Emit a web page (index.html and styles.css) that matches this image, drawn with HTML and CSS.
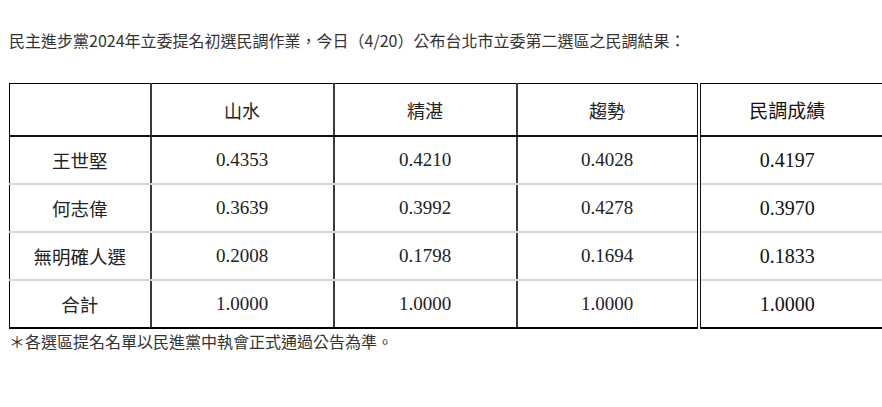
FILE: index.html
```html
<!DOCTYPE html>
<html lang="zh-Hant">
<head>
<meta charset="utf-8">
<link rel="stylesheet" href="styles.css">
</head>
<body>
<p class="title">民主進步黨2024年立委提名初選民調作業，今日（4/20）公布台北市立委第二選區之民調結果：</p>
<table class="poll">
  <colgroup>
    <col class="c1"><col class="c2"><col class="c3"><col class="c4"><col class="c5">
  </colgroup>
  <thead>
    <tr>
      <th></th>
      <th>山水</th>
      <th>精湛</th>
      <th>趨勢</th>
      <th class="total">民調成績</th>
    </tr>
  </thead>
  <tbody>
    <tr>
      <td class="name">王世堅</td>
      <td>0.4353</td>
      <td>0.4210</td>
      <td>0.4028</td>
      <td class="total">0.4197</td>
    </tr>
    <tr>
      <td class="name">何志偉</td>
      <td>0.3639</td>
      <td>0.3992</td>
      <td>0.4278</td>
      <td class="total">0.3970</td>
    </tr>
    <tr>
      <td class="name">無明確人選</td>
      <td>0.2008</td>
      <td>0.1798</td>
      <td>0.1694</td>
      <td class="total">0.1833</td>
    </tr>
    <tr class="last">
      <td class="name">合計</td>
      <td>1.0000</td>
      <td>1.0000</td>
      <td>1.0000</td>
      <td class="total">1.0000</td>
    </tr>
  </tbody>
</table>
<p class="note">＊各選區提名名單以民進黨中執會正式通過公告為準。</p>
</body>
</html>
```
FILE: styles.css
```css
html, body {
  margin: 0;
  padding: 0;
  background: #fff;
}
body {
  padding: 28px 0 0 9px;
  font-family: "Noto Sans CJK TC", "Noto Sans", sans-serif;
  color: #333;
}
.title {
  margin: 0;
  font-size: 16px;
  line-height: 24px;
}
.poll {
  margin-top: 31px;
  border-collapse: collapse;
  table-layout: fixed;
  width: 873px;
  border-top: 1px solid #000;
  border-left: 1px solid #000;
  border-bottom: 2px solid #000;
  color: #222;
}
.c1 { width: 141px; }
.c2 { width: 183px; }
.c3 { width: 183px; }
.c4 { width: 182px; }
.c5 { width: 184px; }
.poll th, .poll td {
  padding: 0;
  text-align: center;
  border-right: 2px solid #3a3a3a;
  font-family: "Liberation Serif", "Noto Sans CJK TC", serif;
  font-size: 19px;
  font-weight: normal;
}
.poll th {
  height: 51px;
  border-bottom: 2px solid #111;
  font-family: "Noto Sans CJK TC", sans-serif;
  font-size: 18px;
}
.poll td {
  height: 46px;
  border-bottom: 2px solid #d6d6d6;
}
.poll tr.last td {
  border-bottom: 2px solid #000;
}
.poll td.name {
  font-family: "Noto Sans CJK TC", sans-serif;
  font-size: 18.5px;
}
.poll th:nth-child(4), .poll td:nth-child(4) {
  border-right: 4px double #111;
}
.poll .total {
  border-right: 1px solid #eee;
  font-size: 20px;
  color: #111;
  padding-right: 8px;
}
.poll th.total {
  font-size: 19px;
}
.note {
  margin: 0;
  font-size: 16px;
  line-height: 24px;
  color: #333;
}
```
